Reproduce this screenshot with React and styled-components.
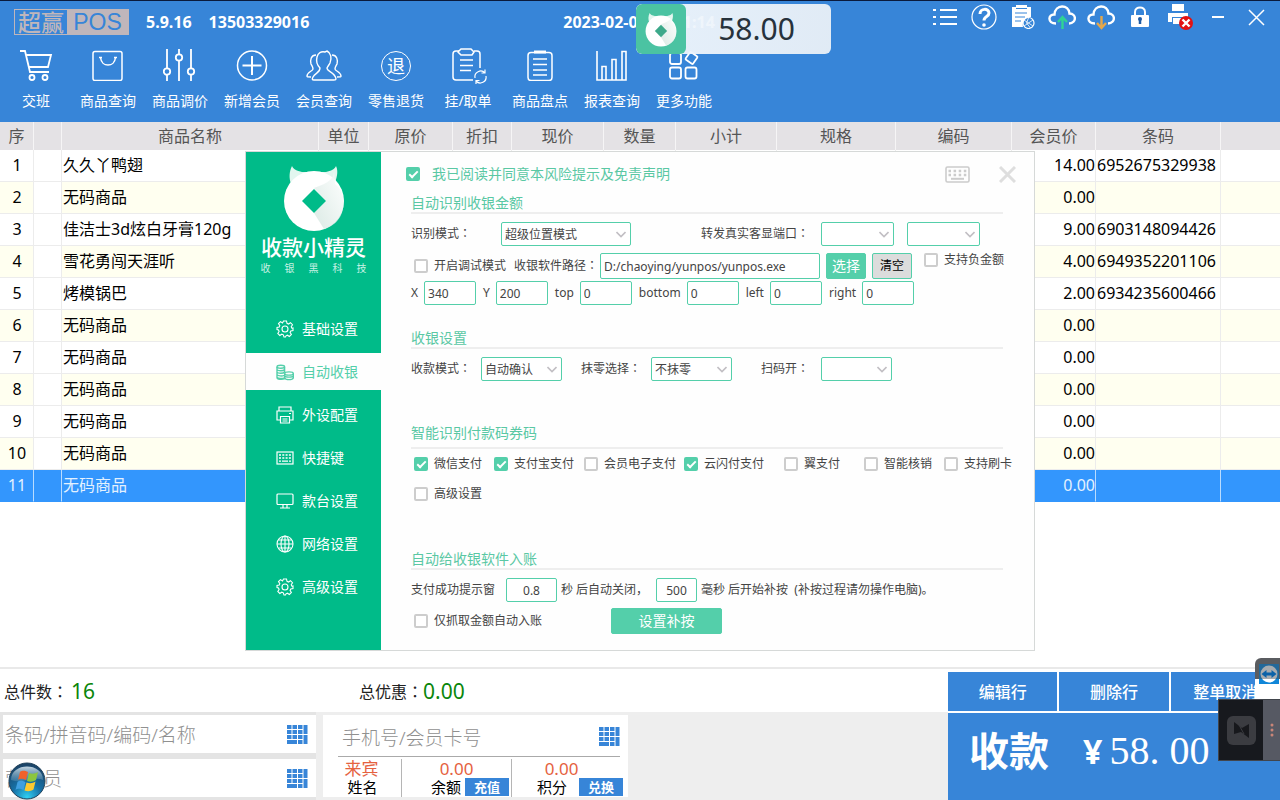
import React from "react";
import styled, { createGlobalStyle, css } from "styled-components";

const GlobalStyle = createGlobalStyle`
  *, *::before, *::after { box-sizing: border-box; }
  body {
    margin: 0;
    background: #fff;
    color: #000;
    font-family: "Noto Sans", "Noto Sans CJK SC", sans-serif;
    font-size: 16px;
  }
  button, input, select { font-family: inherit; margin: 0; }
  button { cursor: pointer; border: 0; padding: 0; background: none; color: inherit; }
`;

const BLUE = "#3785d8";
const GREEN = "#00bb89";
const MINT = "#54cfaa";
const MINT_TEXT = "#5ac8a4";

const Screen = styled.div`
  position: relative;
  display: flex;
  flex-direction: column;
  min-height: 100vh;
  overflow: hidden;
`;

/* full-width colon, centred in its cell */
const ColonMark = styled.span`
  font-family: "Noto Sans CJK TC", sans-serif;
  line-height: 1;
`;
const Colon = () => <ColonMark lang="zh-Hant">：</ColonMark>;

/* ---------- header ---------- */

const Header = styled.header`
  background: ${BLUE};
  border-top: 1px solid #0a1a3c;
  color: #fff;
  height: 122px;
`;

const TitleBar = styled.div`
  display: flex;
  align-items: center;
  height: 42px;
  padding: 0 4px 0 14px;
`;

const Brand = styled.div`
  display: flex;
  height: 26px;
  width: 115px;
  border: 1px solid #bfb6bb;
  line-height: 24px;
  font-size: 23px;
  font-weight: 500;
  color: #bfb6bb;
`;

const BrandName = styled.span`
  width: 52px;
  text-align: center;
`;

const BrandTag = styled.span`
  flex: 1;
  background: #bfb6bb;
  color: ${BLUE};
  font-family: "Liberation Sans", sans-serif;
  font-weight: 400;
  text-align: center;
`;

const TitleText = styled.span`
  font-weight: 700;
  line-height: 40px;
  margin-left: 17px;
`;

const Clock = styled(TitleText)`
  margin-left: 254px;
`;

const WindowTools = styled.div`
  display: flex;
  align-items: center;
  align-self: flex-start;
  margin-left: auto;
  height: 32px;
`;

const WindowButton = styled.button`
  display: grid;
  place-items: center;
  width: 39px;
  height: 32px;
`;

const Toolbar = styled.nav`
  display: flex;
`;

const ToolButton = styled.button`
  display: flex;
  flex-direction: column;
  align-items: center;
  gap: 10px;
  width: 72px;
  padding-top: 4px;
  color: #fff;
  font-size: 14px;
  line-height: 20px;
  white-space: nowrap;
`;

const AmountBubble = styled.div`
  position: absolute;
  top: 4px;
  left: 636px;
  display: flex;
  width: 195px;
  height: 50px;
  border-radius: 6px;
  overflow: hidden;
  background: linear-gradient(100deg, rgba(240, 246, 252, 0.94) 20%, rgba(230, 238, 246, 0.97));
  color: #27323c;
  font-size: 30px;
  line-height: 50px;
`;

const BubbleMark = styled.span`
  display: grid;
  place-items: center;
  width: 50px;
  background: rgba(69, 193, 158, 0.96);
  border-radius: 6px;
`;

const BubbleValue = styled.span`
  flex: 1;
  text-align: center;
  padding-right: 4px;
`;

/* ---------- goods table ---------- */

const Body = styled.main`
  position: relative;
  flex: 1;
  min-height: 545px;
`;

const GoodsTable = styled.table`
  width: 100%;
  table-layout: fixed;
  border-collapse: separate;
  border-spacing: 0;
  line-height: 24px;

  th {
    height: 28px;
    padding: 0;
    background: #e4e2e5;
    border-right: 1px solid #f6f5f6;
    color: #555;
    font-weight: 400;
    white-space: nowrap;
  }

  th:last-child, td:last-child { border-right: 0; }
`;

const Row = styled.tr`
  background: ${(p) => (p.$selected ? "#3396fd" : p.$even ? "#fffff0" : "#fff")};
  color: ${(p) => (p.$selected ? "#e3f1ff" : "#000")};
`;

const Cell = styled.td`
  height: 32px;
  padding: 0 0 2px 1px;
  text-align: ${(p) => p.$align || "left"};
  border-right: 1px solid ${(p) => (p.$selected ? "#b9dcff" : "#ececec")};
  border-bottom: 1px solid ${(p) => (p.$selected ? "#3396fd" : "#ececec")};
  white-space: nowrap;
  ${(p) => p.$blank && !p.$selected && css`background: #fff;`}
`;

/* ---------- dialog ---------- */

const DialogLayer = styled.div`
  position: absolute;
  inset: 29px 0 auto 0;
  display: flex;
  justify-content: center;
`;

const Dialog = styled.section`
  display: flex;
  width: 790px;
  min-height: 500px;
  background: #fefefe;
  border: 1px solid #d6d9d8;
  color: #444;
  font-size: 12px;
  line-height: 18px;
`;

const Sidebar = styled.aside`
  flex: none;
  display: flex;
  flex-direction: column;
  align-items: center;
  width: 135px;
  padding-top: 12px;
  background: ${GREEN};
  color: #fff;
`;

const SidebarTitle = styled.h1`
  margin: 0;
  font-size: 21px;
  font-weight: 500;
  line-height: 30px;
`;

const Tagline = styled.p`
  display: flex;
  justify-content: space-between;
  width: 106px;
  margin: 0;
  font-size: 10px;
  line-height: 12px;
  color: #c9f2e5;
`;

const SideNav = styled.nav`
  display: flex;
  flex-direction: column;
  gap: 6px;
  width: 100%;
  margin-top: 36px;
`;

const SideItem = styled.button`
  display: flex;
  align-items: center;
  gap: 8px;
  height: 37px;
  padding-left: 30px;
  font-size: 14px;
  line-height: 20px;
  color: ${(p) => (p.$active ? MINT : "#fff")};
  background: ${(p) => (p.$active ? "#fefefe" : "transparent")};
`;

const Content = styled.div`
  flex: 1;
  min-width: 0;
  padding: 12px 18px 0 30px;
`;

const Agreement = styled.div`
  display: flex;
  align-items: center;
  height: 20px;
  margin-bottom: 10px;
  margin-left: -5px;
  color: ${MINT_TEXT};
  font-size: 14px;

  label { gap: 12px; }
`;

const DialogTools = styled.div`
  display: flex;
  align-items: center;
  gap: 29px;
  margin-left: auto;

  button { display: grid; }
`;

const Section = styled.section`
  height: ${(p) => p.$height}px;
`;

const SectionTitle = styled.h2`
  max-width: 592px;
  height: ${(p) => (p.$tall ? 25 : 20)}px;
  margin: 0 0 8px;
  border-bottom: 2px solid #eee;
  color: ${MINT_TEXT};
  font-size: 14px;
  font-weight: 400;
  line-height: 18px;
`;

const Line = styled.div`
  display: flex;
  align-items: center;
  height: ${(p) => p.$height || 26}px;
  margin-bottom: ${(p) => p.$after || 0}px;
  margin-left: ${(p) => p.$before || 0}px;
  gap: ${(p) => p.$gap || 0}px;
  white-space: nowrap;
`;

const Field = styled.label`
  display: flex;
  align-items: center;
  gap: ${(p) => p.$gap || 0}px;
  margin-left: ${(p) => p.$before || 0}px;
`;

const FieldName = styled.span`
  width: ${(p) => p.$width}px;
`;

const SelectBox = styled.span`
  position: relative;
  display: block;

  svg {
    position: absolute;
    right: 5px;
    top: 9px;
    pointer-events: none;
  }
`;

const Select = styled.select`
  display: block;
  appearance: none;
  width: ${(p) => p.$width}px;
  height: 24px;
  padding: 0 4px 0 3px;
  border: 1px solid ${MINT};
  border-radius: 2px;
  background: #fff;
  color: #444;
  font-size: 12px;
`;

const TextInput = styled.input`
  width: ${(p) => p.$width}px;
  height: ${(p) => p.$height || 24}px;
  padding: 0 3px;
  border: 1px solid ${MINT};
  border-radius: 2px;
  background: #fff;
  color: #444;
  font-size: 12px;
  text-align: ${(p) => (p.$center ? "center" : "left")};
`;

const CheckLabel = styled.label`
  display: flex;
  align-items: center;
  gap: 6px;
  margin-left: ${(p) => p.$before || 0}px;
  white-space: nowrap;
`;

const CheckInput = styled.input`
  appearance: none;
  display: grid;
  place-items: center;
  width: 14px;
  height: 14px;
  border: 2px solid #cdcdcd;
  border-radius: 2px;
  background: #fff;

  &:checked {
    background: ${MINT};
    border-color: ${MINT};
  }
  &:checked::before {
    content: "";
    width: 9px;
    height: 5px;
    border: solid #fff;
    border-width: 0 0 2px 2px;
    transform: translateY(-1px) rotate(-45deg);
  }
`;

const ActionButton = styled.button`
  width: ${(p) => p.$width}px;
  height: 26px;
  border-radius: 2px;
  background: ${(p) => (p.$muted ? "#dcdcdc" : MINT)};
  border: 1px solid ${MINT};
  color: ${(p) => (p.$muted ? "#000" : "#fff")};
  font-size: ${(p) => (p.$muted ? 12 : 14)}px;
  line-height: 18px;
`;

const CheckGrid = styled.div`
  display: grid;
  grid-template-columns: 80px 90px 100px 100px 80px 80px 80px;
  grid-auto-rows: 30px;
  margin: -8px 0 0 3px;
`;

/* ---------- footer ---------- */

const Footer = styled.footer`
  display: flex;
  border-top: 2px solid #e9e9e9;
  background: #fff;
`;

const FooterMain = styled.div`
  flex: 1;
  display: flex;
  flex-direction: column;
`;

const Totals = styled.div`
  display: flex;
  align-items: center;
  height: 43px;
  padding-left: 4px;
  color: #222;
`;

const Total = styled.span`
  display: flex;
  align-items: center;
  width: 355px;
`;

const TotalValue = styled.strong`
  margin-left: ${(p) => p.$gap || 0}px;
  color: #0b860b;
  font-size: 21px;
  font-weight: 400;
`;

const Panels = styled.div`
  display: flex;
  flex: 1;
  background: #eee;
`;

const SearchColumn = styled.div`
  position: relative;
  display: flex;
  flex-direction: column;
  gap: 6px;
  width: 316px;
  padding: 3px 0 3px 3px;
  background: #e4e4e4;
`;

const SearchBox = styled.div`
  display: flex;
  align-items: center;
  height: 38px;
  padding-right: 8px;
  background: #fff;
`;

const SearchInput = styled.input`
  flex: 1;
  min-width: 0;
  padding: 2px 2px 0;
  border: 0;
  background: none;
  font-size: 19px;

  &::placeholder { color: #909090; font-weight: 300; }
`;

const StartOrb = styled.button`
  position: absolute;
  left: 8px;
  bottom: 0;
  display: block;
  width: 38px;
  height: 38px;
`;

const MemberPanel = styled.div`
  width: 305px;
  margin: 3px 0 3px 7px;
  padding: 0 5px 0 15px;
  background: #fff;
`;

const MemberSearch = styled.div`
  display: flex;
  align-items: center;
  height: 42px;
  margin-right: 3px;
  padding: 2px 0 0 2px;
  border-bottom: 1px solid #aaa;
`;

const MemberStats = styled.div`
  display: flex;
  padding-top: 2px;
`;

const Stat = styled.div`
  flex: none;
  width: ${(p) => p.$width}px;
  height: 38px;
  border-right: ${(p) => (p.$last ? "0" : "1px solid #b5b5b5")};
  text-align: center;
`;

const StatValue = styled.div`
  padding-right: ${(p) => p.$shift || 0}px;
  color: #e5623f;
  font-size: 17px;
  line-height: 19px;
`;

const StatLabel = styled.div`
  display: flex;
  justify-content: ${(p) => (p.$end ? "flex-end" : "center")};
  gap: ${(p) => p.$gap || 4}px;
  padding-right: ${(p) => p.$inset || 0}px;
  font-size: 15px;
  line-height: 18px;
  white-space: nowrap;
`;

const SmallButton = styled.button`
  width: 44px;
  height: 18px;
  background: ${BLUE};
  color: #fff;
  font-size: 13px;
  font-weight: 700;
  line-height: 18px;
`;

const Checkout = styled.div`
  width: 332px;
  padding-top: 3px;
`;

const RowActions = styled.div`
  display: flex;
  gap: 2px;
  margin-bottom: 2px;
`;

const RowAction = styled.button`
  flex: 1;
  height: 39px;
  padding-bottom: 2px;
  background: ${BLUE};
  color: #fff;
  font-size: 16px;
  font-weight: 500;
`;

const PayButton = styled.button`
  display: flex;
  align-items: center;
  width: 100%;
  height: 87px;
  padding: 0 0 12px 21px;
  background: ${BLUE};
  color: #fff;
  font-size: 40px;
  font-weight: 700;
  line-height: 60px;
`;

const PayCurrency = styled.span`
  margin-left: 34px;
  font-size: 34px;
`;

const PayAmount = styled.span`
  margin-left: 7px;
  font-family: "Liberation Serif", serif;
  font-weight: 400;
  white-space: pre;
`;

/* ---------- floating remote-control widgets ---------- */

const RemoteTab = styled.div`
  position: absolute;
  right: 0;
  bottom: 101px;
  width: 25px;
  height: 41px;
  background: linear-gradient(#5a5c60 0 21px, #fff 21px);
  border-radius: 6px 0 0 0;
  padding: 6px 0 0 4px;
`;

const RemotePanel = styled.div`
  position: absolute;
  right: 0;
  bottom: 39px;
  display: flex;
  width: 62px;
  height: 62px;
  background: #17191e;
  border: solid #41454c;
  border-width: 1px 0 1px 1px;
`;

const RemoteScreen = styled.div`
  flex: 1;
  display: grid;
  place-items: center;
`;

const RemoteGrip = styled.div`
  display: grid;
  place-items: center;
  width: 17px;
  background: #565963;
`;

/* ---------- icons ---------- */

const Icon = ({ w = 34, h = 34, box, children, sw = 1.5, ...rest }) => (
  <svg
    width={w}
    height={h}
    viewBox={box || `0 0 ${w} ${h}`}
    fill="none"
    stroke="currentColor"
    strokeWidth={sw}
    aria-hidden="true"
    {...rest}
  >
    {children}
  </svg>
);

const CartIcon = () => (
  <Icon sw={1.8}>
    <path d="M1 4h5l5 21h19M7 8h25l-3 12H10" />
    <circle cx="13" cy="30.500" r="2.500" />
    <circle cx="26" cy="30.500" r="2.500" />
  </Icon>
);
const BagIcon = () => (
  <Icon>
    <rect x="2" y="4.500" width="29" height="29" rx="2" />
    <path d="M9.500 10.500c1 10 14 10 15 0M8 10.500h3M23 10.500h3" />
  </Icon>
);
const SlidersIcon = () => (
  <Icon sw={1.8}>
    <path d="M4 2v19M4 28v6M16 2v5M16 14v20M28 2v19M28 28v6" />
    <circle cx="4" cy="24.500" r="3.200" />
    <circle cx="16" cy="10.500" r="3.200" />
    <circle cx="28" cy="24.500" r="3.200" />
  </Icon>
);
const PlusIcon = () => (
  <Icon>
    <circle cx="17" cy="18.500" r="14.500" />
    <path d="M17 9v19M7.500 18.500h19" strokeWidth="2" />
  </Icon>
);
const MembersIcon = () => (
  <Icon w={38} box="0 0 38 34" sw={1.4}>
    <path d="M15 21c-3-3-4-7-3-11 1-4 4-6 8-5l2-1c4 2 5 7 3 12-1 2-2 3-3 5 0 4 8 4 9 11 0 1-1 1-2 1H9c-2 0-2-1-1-3 2-4 7-4 7-9z" />
    <path d="M11 8c-5 0-6 5-5 9 1 2 2 3 2 5 0 2-6 3-6 7 0 1 0 1 4 1M27 8c5 0 6 5 5 9-1 2-2 3-2 5 0 2 6 3 6 7 0 1 0 1-4 1" />
  </Icon>
);
const RefundMark = styled.span`
  display: grid;
  place-items: center;
  width: 30px;
  height: 30px;
  margin: 4px 0 0;
  border: 1px solid #fff;
  border-radius: 50%;
  font-size: 18px;
  line-height: 20px;
`;
const HoldIcon = () => (
  <Icon w={38} overflow="visible">
    <path d="M10 4H7C5 4 4 5 4 7v23c0 2 1 3 3 3h17M25 4h3c2 0 3 1 3 3v14" />
    <path d="M12 2h10l3 3-2 3H12L9 5zM11 13h13M11 18.500h13M11 23.500h11" />
    <path d="M26 31a5.800 5.800 0 0 1 10-5M37 29a5.800 5.800 0 0 1-10 5M36 22.500V26h-3.500M27 37v-3.500h3.500" strokeWidth="1.200" />
  </Icon>
);
const StockIcon = () => (
  <Icon>
    <rect x="5" y="5.500" width="24" height="28" rx="3" />
    <path d="M11 5h12" strokeWidth="3" />
    <path d="M10 12h14M10 17.500h14M10 23h14M10 28h14" />
  </Icon>
);
const ChartIcon = () => (
  <Icon sw={1.6}>
    <path d="M2 4v29h29V4.500h-4V33M7 33V19.500h4V33M17 33V12.500h4V33" />
  </Icon>
);
const MoreIcon = () => (
  <Icon sw={1.8}>
    <rect x="3" y="6" width="11" height="11" rx="2" />
    <rect x="3" y="20.500" width="11" height="11" rx="2" />
    <rect x="18.500" y="20.500" width="11" height="11" rx="2" />
    <rect x="20" y="6.500" width="9" height="9" rx="1" transform="rotate(35 24.500 11)" />
  </Icon>
);

const ListIcon = () => (
  <Icon w={24} h={18} sw={2}>
    <path d="M0 2h3M0 9h3M0 16h3M7 2h17M7 9h17M7 16h17" />
  </Icon>
);
const HelpIcon = () => (
  <Icon w={26} h={26}>
    <circle cx="13" cy="13" r="12" strokeWidth="1.200" />
    <path d="M9 10c0-6 9-6 9-1 0 4-5 3-5 7.500" strokeWidth="3" />
    <circle cx="13" cy="21" r="1.800" fill="currentColor" stroke="none" />
  </Icon>
);
const ReportIcon = () => (
  <Icon w={24} h={24}>
    <path fill="currentColor" stroke="none" d="M1 2h4V0h11v2h4v10a8 8 0 0 0-8 10H1z" />
    <path d="M4 8h12M4 12h10M4 16h6M5 3.500h11" stroke={BLUE} strokeWidth="1" />
    <circle cx="17.500" cy="18" r="5.500" strokeWidth="1.200" />
    <path d="M13 15l9 6M22 15l-9 6M17.500 13l-2 5 4 5" strokeWidth=".8" />
  </Icon>
);
const CloudIcon = ({ up }) => (
  <Icon w={28} h={26} sw={2.4}>
    <path d="M8 19.500C-1 19.500 0 10 6.500 10.500 7 0 21 0 21.500 9.500 28.500 9.500 29 19 21 19.500" />
    {up ? (
      <path d="M14.500 25V14M10 18l4.500-5 4.500 5" stroke="#2fd394" />
    ) : (
      <path d="M14.500 12v11M10 19l4.500 5 4.500-5" stroke="#e5a74a" />
    )}
  </Icon>
);
const LockIcon = () => (
  <Icon w={20} h={22} sw={2}>
    <path d="M5 10V6c0-6 10-6 10 0v4" />
    <rect x="1" y="9" width="18" height="12" rx="1" fill="currentColor" stroke="none" />
    <path d="M10 13v5" stroke="#1f5ca6" strokeWidth="2.500" />
    <circle cx="10" cy="13" r="2" fill="#1f5ca6" stroke="none" />
  </Icon>
);
const PrinterErrorIcon = () => (
  <Icon w={31} h={27} box="-4 0 31 27">
    <path fill="currentColor" stroke="none" d="M5 0h12v7H5zM1 9h20v9H17v-5H5v5H1zM6 14h10v6H6z" />
    <path d="M3 8h16" stroke={BLUE} />
    <circle cx="19" cy="19" r="7" fill="#e21212" stroke="none" />
    <path d="M15.500 15.500l7 7M22.500 15.500l-7 7" strokeWidth="2.400" />
  </Icon>
);
const MinimizeIcon = () => (
  <Icon w={12} h={4} sw={2}><path d="M0 2h12" /></Icon>
);
const CloseIcon = ({ sw = 1.5, ...rest }) => (
  <Icon w={17} h={17} sw={sw} {...rest}><path d="M1 1l15 15M16 1L1 16" /></Icon>
);

const SpiritMark = ({ w, h, hole = GREEN }) => (
  <svg width={w} height={h} viewBox="0 0 62 68" aria-hidden="true">
    <defs>
      <linearGradient id={`fold${w}`} x1="1" y1="0" x2="0" y2="1">
        <stop offset="0" stopColor="#fff" />
        <stop offset="1" stopColor="#cfe3dc" />
      </linearGradient>
    </defs>
    <path d="M9 2c1 3 5 5 10 6h24c5-1 9-3 10-6 3 6 0 13-1 17L8 20C6 14 6 8 9 2z" fill="#e2f6ef" />
    <circle cx="31" cy="37" r="30" fill="#fff" />
    <path d="M51 5c1 9-5 14-20 19l12 13-12 12 10 16C58 60 62 46 60 33c-1-6-4-10-8-13z" fill={`url(#fold${w})`} opacity=".75" />
    <path d="M31 25l12 12-12 12-12-12z" fill={hole} />
  </svg>
);

const GearIcon = () => (
  <Icon w={18} h={18} sw={1.1}>
    <path d="M7.500 1h3l.5 2.300 1.500.7 2-1.300 2 2-1.300 2 .7 1.500L17 8v2.500l-2.200.500-.7 1.500 1.300 2-2 2-2-1.300-1.400.600L9.500 17H8l-.7-2.200-1.500-.6-2 1.300-2-2 1.300-2-.6-1.500L1 9.500v-2L3.200 7l.6-1.400-1.300-2 2-2 2 1.300z" />
    <circle cx="9" cy="9" r="3" />
  </Icon>
);
const CoinsIcon = () => (
  <Icon w={18} h={18} sw={1.4}>
    <ellipse cx="4.800" cy="3.800" rx="3.800" ry="1.500" />
    <path d="M1 4v10.500c0 2 5 2.300 8 1.200M8.600 4v5M1 6.500c1 1.700 6.500 1.700 7.600 0M1 9c1 1.700 6.500 1.700 7.600 0M1 11.500c1 1.700 5 1.800 7.600.800M1 14c1 1.700 5 1.800 7.600.800" />
    <ellipse cx="13" cy="10.500" rx="4.300" ry="1.600" />
    <path d="M8.700 10.500V15c1 2.200 7.600 2.200 8.600 0v-4.500M8.700 12.800c1 1.800 7.600 1.800 8.600 0" />
  </Icon>
);
const PrintIcon = () => (
  <Icon w={18} h={18} sw={1.2}>
    <path d="M3 5V1h12v4M4 14H1V5h16v9h-3M4.500 10.500h9V17h-9zM6.500 13h5M6.500 15h5M13 7.500h2" />
  </Icon>
);
const KeysIcon = () => (
  <Icon w={18} h={14} sw={1.2}>
    <rect x="1" y="1" width="16" height="12" />
    <path d="M3 4h12M3 7h12" strokeDasharray="2 1.300" strokeWidth="1.600" />
    <path d="M3 10.200h2M6 10.200h6M13 10.200h2" />
  </Icon>
);
const MonitorIcon = () => (
  <Icon w={18} h={16} sw={1.2}>
    <rect x="1" y="1" width="16" height="10.500" rx="1" />
    <path d="M7 12v3M11 12v3M4 15h10" />
  </Icon>
);
const GlobeIcon = () => (
  <Icon w={18} h={18} sw={1.1}>
    <circle cx="9" cy="9" r="8" />
    <ellipse cx="9" cy="9" rx="4" ry="8" />
    <path d="M9 1v16M1 9h16M2.500 5h13M2.500 13h13" />
  </Icon>
);

const KeyboardIcon = () => (
  <Icon w={25} h={17} stroke="#ccc" sw={1.6}>
    <rect x="1" y="1" width="23" height="15" rx="1.500" />
    <path d="M3.500 5h18M3.500 9h18" strokeDasharray="2.500 2.600" strokeWidth="2.500" />
    <path d="M6 12.800h13" strokeWidth="2" />
  </Icon>
);

const Chevron = () => (
  <Icon w={10} h={7} stroke="#c2bfc4" sw={1.6}><path d="M.5 1L5 5.500 9.500 1" /></Icon>
);

const KeypadIcon = () => (
  <svg width="21" height="19" viewBox="0 0 21 19" fill={BLUE} aria-hidden="true">
    {[0, 5.500, 11].map((x) =>
      [0, 5, 10].map((y) => <rect key={`${x}-${y}`} x={x} y={y} width="4.500" height="4" />)
    )}
    <rect x="0" y="15" width="10" height="4" />
    <rect x="11" y="15" width="4.500" height="4" />
    <rect x="16.500" y="0" width="4" height="9" />
    <rect x="16.500" y="10" width="4" height="9" />
  </svg>
);

const OrbIcon = () => (
  <svg width="38" height="38" viewBox="0 0 38 38" aria-hidden="true">
    <defs>
      <radialGradient id="orb" cx=".5" cy=".95" r=".9">
        <stop offset="0" stopColor="#2fd0f2" />
        <stop offset=".45" stopColor="#1672a8" />
        <stop offset="1" stopColor="#1b4468" />
      </radialGradient>
      <linearGradient id="shine" x1="0" y1="0" x2="0" y2="1">
        <stop offset="0" stopColor="#e2eef5" stopOpacity=".85" />
        <stop offset="1" stopColor="#8fb4cb" stopOpacity=".25" />
      </linearGradient>
    </defs>
    <circle cx="19" cy="19" r="18" fill="url(#orb)" stroke="#20415a" />
    <path d="M3 18C3 0 35 0 35 18c-9-4-20 4-32 0z" fill="url(#shine)" />
    <path d="M12 10c3-2 5-1 8 0l-2 8c-3-1-5-2-8 0z" fill="#f0622b" />
    <path d="M21 11c3 1 6 1 9-1l-2 8c-3 2-6 2-9 1z" fill="#8cc63e" />
    <path d="M9.500 20c3-2 5-1 8 0l-2 8c-3-1-5-2-8 0z" fill="#3f9fe0" />
    <path d="M18.500 20.500c3 1 6 1 9-1l-2 8c-3 2-6 2-9 1z" fill="#fdc92f" />
  </svg>
);

const RemoteIcon = () => (
  <svg width="20" height="20" viewBox="0 0 20 20" aria-hidden="true">
    <rect width="20" height="20" fill="#1086d8" />
    <circle cx="10" cy="10" r="8.500" fill="#fff" />
    <path d="M0 0h20v15H0z" fill="#3c4650" opacity=".45" />
    <path d="M2.500 10l5-4v2.500h5V6l5 4-5 4v-2.500h-5V14z" fill="#0b62a8" />
  </svg>
);

/* ---------- data ---------- */

const columns = [
  ["序", 34], ["", 28], ["商品名称", 257], ["单位", 50], ["原价", 84], ["折扣", 59], ["现价", 92],
  ["数量", 72], ["小计", 101], ["规格", 119], ["编码", 116], ["会员价", 84], ["条码", 125], ["", null],
];

const goods = [
  ["久久丫鸭翅", "14.00", "6952675329938"],
  ["无码商品", "0.00", ""],
  ["佳洁士3d炫白牙膏120g", "9.00", "6903148094426"],
  ["雪花勇闯天涯听", "4.00", "6949352201106"],
  ["烤模锅巴", "2.00", "6934235600466"],
  ["无码商品", "0.00", ""],
  ["无码商品", "0.00", ""],
  ["无码商品", "0.00", ""],
  ["无码商品", "0.00", ""],
  ["无码商品", "0.00", ""],
  ["无码商品", "0.00", ""],
];

const tools = [
  ["交班", <CartIcon />],
  ["商品查询", <BagIcon />],
  ["商品调价", <SlidersIcon />],
  ["新增会员", <PlusIcon />],
  ["会员查询", <MembersIcon />],
  ["零售退货", <RefundMark>退</RefundMark>],
  ["挂/取单", <HoldIcon />],
  ["商品盘点", <StockIcon />],
  ["报表查询", <ChartIcon />],
  ["更多功能", <MoreIcon />],
];

const windowTools = [
  ["菜单", <ListIcon />],
  ["帮助", <HelpIcon />],
  ["日志", <ReportIcon />],
  ["上传", <CloudIcon up />],
  ["下载", <CloudIcon />],
  ["锁屏", <LockIcon />],
  ["打印机", <PrinterErrorIcon />],
  ["最小化", <MinimizeIcon />],
  ["关闭", <CloseIcon />],
];

const sideItems = [
  ["基础设置", <GearIcon />],
  ["自动收银", <CoinsIcon />],
  ["外设配置", <PrintIcon />],
  ["快捷键", <KeysIcon />],
  ["款台设置", <MonitorIcon />],
  ["网络设置", <GlobeIcon />],
  ["高级设置", <GearIcon />],
];

const offsets = [["X", "340"], ["Y", "200"], ["top", "0"], ["bottom", "0"], ["left", "0"], ["right", "0"]];

const payKinds = [
  ["微信支付", true], ["支付宝支付", true], ["会员电子支付", false], ["云闪付支付", true],
  ["翼支付", false], ["智能核销", false], ["支持刷卡", false], ["高级设置", false],
];

/* ---------- parts ---------- */

const Check = ({ label, checked, before }) => (
  <CheckLabel $before={before}>
    <CheckInput type="checkbox" defaultChecked={checked} />
    <span>{label}</span>
  </CheckLabel>
);

const Choice = ({ width, value = "", label }) => (
  <SelectBox>
    <Select $width={width} defaultValue={value} aria-label={label}>
      <option value={value}>{value}</option>
    </Select>
    <Chevron />
  </SelectBox>
);

const GoodsList = () => (
  <GoodsTable>
    <colgroup>
      {columns.map(([, width], i) => (
        <col key={i} width={width || undefined} />
      ))}
    </colgroup>
    <thead>
      <tr>{columns.map(([name], i) => <th key={i}>{name}</th>)}</tr>
    </thead>
    <tbody>
      {goods.map(([name, price, code], i) => {
        const selected = i === 10;
        return (
          <Row key={i} $even={i % 2 === 1} $selected={selected}>
            <Cell $align="center" $selected={selected}>{i + 1}</Cell>
            <Cell $blank $selected={selected} />
            <Cell $selected={selected}>{name}</Cell>
            {columns.slice(3, 11).map((_, c) => <Cell key={c} $selected={selected} />)}
            <Cell $align="right" $selected={selected}>{price}</Cell>
            <Cell $selected={selected}>{code}</Cell>
            <Cell $selected={selected} />
          </Row>
        );
      })}
    </tbody>
  </GoodsTable>
);

const SettingsDialog = () => (
  <Dialog role="dialog" aria-label="收款小精灵">
    <Sidebar>
      <SpiritMark w={62} h={68} />
      <SidebarTitle>收款小精灵</SidebarTitle>
      <Tagline>{[..."收银黑科技"].map((c) => <span key={c}>{c}</span>)}</Tagline>
      <SideNav>
        {sideItems.map(([name, icon], i) => (
          <SideItem key={name} $active={i === 1}>{icon}{name}</SideItem>
        ))}
      </SideNav>
    </Sidebar>
    <Content>
      <Agreement>
        <Check label="我已阅读并同意本风险提示及免责声明" checked />
        <DialogTools>
          <button aria-label="键盘"><KeyboardIcon /></button>
          <button aria-label="关闭"><CloseIcon stroke="#dedede" sw={3} /></button>
        </DialogTools>
      </Agreement>

      <Section $height={135}>
        <SectionTitle>自动识别收银金额</SectionTitle>
        <Line $height={24} $after={7}>
          <Field>
            <FieldName $width={90}>识别模式<Colon /></FieldName>
            <Choice width={130} value="超级位置模式" />
          </Field>
          <Field $before={70}>
            <FieldName $width={120}>转发真实客显端口<Colon /></FieldName>
            <Choice width={73} />
          </Field>
          <Field $before={13}><Choice width={73} label="端口参数" /></Field>
        </Line>
        <Line $after={2}>
          <Check label="开启调试模式" before={3} />
          <Field $before={8}>
            <FieldName $width={86}>收银软件路径<Colon /></FieldName>
            <TextInput $width={220} $height={26} defaultValue="D:/chaoying/yunpos/yunpos.exe" />
          </Field>
          <Line $gap={6} $before={6}>
            <ActionButton $width={40}>选择</ActionButton>
            <ActionButton $width={40} $muted>清空</ActionButton>
          </Line>
          <Line $height={14} $after={12}><Check label="支持负金额" before={12} /></Line>
        </Line>
        <Line $height={24} $gap={7}>
          {offsets.map(([name, value]) => (
            <Field key={name} $gap={6}>
              {name}
              <TextInput $width={52} defaultValue={value} />
            </Field>
          ))}
        </Line>
      </Section>

      <Section $height={95}>
        <SectionTitle>收银设置</SectionTitle>
        <Line $height={24}>
          <Field>
            <FieldName $width={70}>收款模式<Colon /></FieldName>
            <Choice width={81} value="自动确认" />
          </Field>
          <Field $before={19}>
            <FieldName $width={70}>抹零选择<Colon /></FieldName>
            <Choice width={81} value="不抹零" />
          </Field>
          <Field $before={29}>
            <FieldName $width={60}>扫码开<Colon /></FieldName>
            <Choice width={71} />
          </Field>
        </Line>
      </Section>

      <Section $height={126}>
        <SectionTitle $tall>智能识别付款码券码</SectionTitle>
        <CheckGrid>
          {payKinds.map(([name, on]) => <Check key={name} label={name} checked={on} />)}
        </CheckGrid>
      </Section>

      <Section $height={90}>
        <SectionTitle>自动给收银软件入账</SectionTitle>
        <Line $height={24} $after={6} $gap={4}>
          <Field>
            <FieldName $width={95}>支付成功提示窗</FieldName>
            <TextInput $width={51} $center defaultValue="0.8" />
          </Field>
          <Field>
            <FieldName $width={95}>秒 后自动关闭，</FieldName>
            <TextInput $width={41} $center defaultValue="500" />
          </Field>
          <span>毫秒 后开始补按&nbsp; (补按过程请勿操作电脑)。</span>
        </Line>
        <Line $gap={69}>
          <Check label="仅抓取金额自动入账" before={3} />
          <ActionButton $width={111}>设置补按</ActionButton>
        </Line>
      </Section>
    </Content>
  </Dialog>
);

export default function App() {
  return (
    <Screen>
      <GlobalStyle />
      <Header>
        <TitleBar>
          <Brand><BrandName>超赢</BrandName><BrandTag>POS</BrandTag></Brand>
          <TitleText>5.9.16</TitleText>
          <TitleText>13503329016</TitleText>
          <Clock>2023-02-02 19:11:14</Clock>
          <WindowTools>
            {windowTools.map(([name, icon]) => (
              <WindowButton key={name} aria-label={name}>{icon}</WindowButton>
            ))}
          </WindowTools>
        </TitleBar>
        <Toolbar>
          {tools.map(([name, icon]) => <ToolButton key={name}>{icon}{name}</ToolButton>)}
        </Toolbar>
      </Header>

      <Body>
        <GoodsList />
        <DialogLayer><SettingsDialog /></DialogLayer>
      </Body>

      <Footer>
        <FooterMain>
          <Totals>
            <Total>总件数<Colon /><TotalValue $gap={3}>16</TotalValue></Total>
            <Total>总优惠<Colon /><TotalValue>0.00</TotalValue></Total>
          </Totals>
          <Panels>
            <SearchColumn>
              <SearchBox>
                <SearchInput aria-label="商品" placeholder="条码/拼音码/编码/名称" />
                <KeypadIcon />
              </SearchBox>
              <SearchBox>
                <SearchInput aria-label="营业员" placeholder="营业员" />
                <KeypadIcon />
              </SearchBox>
              <StartOrb aria-label="开始"><OrbIcon /></StartOrb>
            </SearchColumn>
            <MemberPanel>
              <MemberSearch>
                <SearchInput aria-label="会员" placeholder="手机号/会员卡号" />
                <KeypadIcon />
              </MemberSearch>
              <MemberStats>
                <Stat $width={64}>
                  <StatValue $shift={16}>来宾</StatValue>
                  <StatLabel $inset={14}>姓名</StatLabel>
                </Stat>
                <Stat $width={110}>
                  <StatValue>0.00</StatValue>
                  <StatLabel $end $inset={2}><span>余额</span><SmallButton>充值</SmallButton></StatLabel>
                </Stat>
                <Stat $width={111} $last>
                  <StatValue $shift={12}>0.00</StatValue>
                  <StatLabel $end $gap={12}><span>积分</span><SmallButton>兑换</SmallButton></StatLabel>
                </Stat>
              </MemberStats>
            </MemberPanel>
          </Panels>
        </FooterMain>
        <Checkout>
          <RowActions>
            <RowAction>编辑行</RowAction>
            <RowAction>删除行</RowAction>
            <RowAction>整单取消</RowAction>
          </RowActions>
          <PayButton>
            收款<PayCurrency>¥</PayCurrency><PayAmount>58. 00</PayAmount>
          </PayButton>
        </Checkout>
      </Footer>

      <AmountBubble>
        <BubbleMark><SpiritMark w={32} h={35} hole="#3da98a" /></BubbleMark>
        <BubbleValue>58.00</BubbleValue>
      </AmountBubble>
      <RemoteTab><RemoteIcon /></RemoteTab>
      <RemotePanel>
        <RemoteScreen>
          <svg width="29" height="29" viewBox="0 0 29 29" aria-hidden="true">
            <rect width="29" height="29" rx="6" fill="#3b3c41" />
            <path d="M7 6l8 6 7-4v14l-8-6-7 2z" fill="#17181c" />
            <path d="M12 9l5 9" stroke="#3b3c41" />
          </svg>
        </RemoteScreen>
        <RemoteGrip>
          <svg width="4" height="14" fill="#c98578" aria-hidden="true">
            <circle cx="2" cy="2" r="1.500" />
            <circle cx="2" cy="7" r="1.500" />
            <circle cx="2" cy="12" r="1.500" />
          </svg>
        </RemoteGrip>
      </RemotePanel>
    </Screen>
  );
}
